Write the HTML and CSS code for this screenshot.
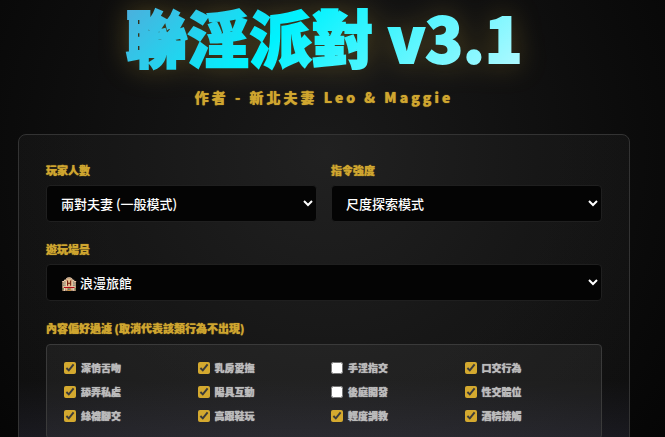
FILE: index.html
```html
<!DOCTYPE html>
<html lang="zh-TW">
<head>
  <meta charset="UTF-8">
  <meta name="viewport" content="width=device-width, initial-scale=1.0">
  <title>聯淫派對 v3.1</title>
  <link rel="stylesheet" href="styles.css">
</head>
<body>
  <div class="container">
    <header class="header">
      <h1>聯淫派對 v3.1</h1>
      <p class="author">作者 - 新北夫妻 Leo &amp; Maggie</p>
    </header>

    <main class="card">
      <div class="row">
        <div class="field">
          <label for="players">玩家人數</label>
          <select id="players">
            <option>兩對夫妻 (一般模式)</option>
          </select>
        </div>
        <div class="field">
          <label for="level">指令強度</label>
          <select id="level">
            <option>尺度探索模式</option>
          </select>
        </div>
      </div>

      <div class="field">
        <label for="scene">遊玩場景</label>
        <select id="scene">
          <option>🏨 浪漫旅館</option>
        </select>
      </div>

      <fieldset class="field">
        <legend>內容偏好過濾 (取消代表該類行為不出現)</legend>
        <div class="filters">
          <label><input type="checkbox" checked>深情舌吻</label>
          <label><input type="checkbox" checked>乳房愛撫</label>
          <label><input type="checkbox">手淫指交</label>
          <label><input type="checkbox" checked>口交行為</label>
          <label><input type="checkbox" checked>舔弄私處</label>
          <label><input type="checkbox" checked>陽具互動</label>
          <label><input type="checkbox">後庭開發</label>
          <label><input type="checkbox" checked>性交體位</label>
          <label><input type="checkbox" checked>絲襪腳交</label>
          <label><input type="checkbox" checked>高跟鞋玩</label>
          <label><input type="checkbox" checked>輕度調教</label>
          <label><input type="checkbox" checked>酒精接觸</label>
        </div>
      </fieldset>
    </main>
  </div>
</body>
</html>
```

FILE: styles.css
```css
* {
  box-sizing: border-box;
}
body {
  margin: 0;
  height: 100vh;
  overflow: hidden;
  padding: 0 35px 0 18px;
  background: radial-gradient(circle at 49% 35%, #1a1a1a 0%, #050505 100%);
  color: #fff;
  font-family: "Noto Sans CJK TC", sans-serif;
}
.header {
  text-align: center;
}
h1 {
  display: inline-block;
  margin: 0;
  font-size: 62px;
  font-weight: 900;
  line-height: 72px;
  background: linear-gradient(135deg, #4facdb 0%, #00f2fe 40%, #b4f9ff 100%);
  -webkit-background-clip: text;
  background-clip: text;
  color: transparent;
  -webkit-text-stroke: 2px transparent;
  filter: drop-shadow(0 0 14px rgba(212, 175, 55, 0.3));
}
.author {
  margin: 14px 0 26px;
  color: #cfa62f;
  font-size: 14px;
  font-weight: 900;
  line-height: 22px;
  letter-spacing: 3px;
  text-shadow: 0 0 1px #cfa62f;
}
.card {
  padding: 27px;
  border: 1px solid #333;
  border-radius: 8px;
  background: linear-gradient(to bottom, rgba(255, 255, 255, 0.03) 70%, rgba(150, 150, 200, 0.16) 92%);
}
.row {
  display: grid;
  grid-template-columns: 1fr 1fr;
  gap: 14px;
}
.field {
  min-width: 0;
  margin: 0 0 19px;
  padding: 0;
  border: none;
}
.field > label,
legend {
  display: block;
  margin-bottom: 7px;
  padding: 0;
  color: #cfa62f;
  font-size: 11px;
  font-weight: 900;
  line-height: 16px;
  text-shadow: 0 0 1px #cfa62f;
}
legend {
  margin-bottom: 8px;
}
select {
  display: block;
  width: 100%;
  height: 37px;
  padding: 0 10px;
  border: 1px solid #1f1f1f;
  border-radius: 4px;
  background: #040404;
  color: #fff;
  font-family: inherit;
  font-size: 13px;
  font-weight: 500;
}
.filters {
  display: grid;
  grid-template-columns: repeat(4, 1fr);
  gap: 9px 14px;
  padding: 15px 17px;
  border: 1px solid #3a3a3a;
  border-radius: 4px;
  background: rgba(255, 255, 255, 0.05);
}
.filters label {
  display: flex;
  align-items: center;
  gap: 5px;
  color: #bbb;
  font-size: 10px;
  font-weight: 900;
  line-height: 15px;
  text-shadow: 0 0 1px #bbb;
}
.filters input {
  width: 12px;
  height: 12px;
  margin: 0;
  accent-color: #d4a92f;
}
```
